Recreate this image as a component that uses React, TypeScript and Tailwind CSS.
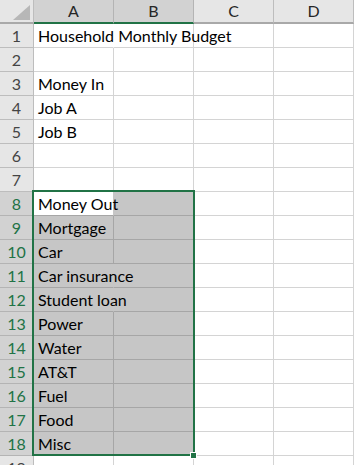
const rows: string[] = [
  "Household Monthly Budget",
  "",
  "Money In",
  "Job A",
  "Job B",
  "",
  "",
  "Money Out",
  "Mortgage",
  "Car",
  "Car insurance",
  "Student loan",
  "Power",
  "Water",
  "AT&T",
  "Fuel",
  "Food",
  "Misc",
  "",
];

// rows whose text runs past column A hide the A/B gridline
const spills = [1, 8, 11, 12];

const cols = ["A", "B", "C", "D"];

export default function App() {
  return (
    <div className="relative w-[355px] h-[465px] overflow-hidden bg-white font-['Lato','Liberation_Sans',sans-serif]">
      {/* column headers */}
      <div className="flex h-[24px]">
        <div className="relative w-[34px] h-full bg-[#e6e6e6] border-r border-b-2 border-r-[#bdbdbd] border-b-[#a9a9a9]">
          <svg className="absolute left-[13px] top-[5px]" width="17" height="15" viewBox="0 0 17 15">
            <polygon points="17,0 17,15 0,15" fill="#b7b7b7" />
          </svg>
        </div>
        {cols.map((c, i) => {
          const sel = i < 2;
          return (
            <div
              key={c}
              className={
                sel
                  ? "w-[80px] h-full flex items-center justify-center bg-[#d2d2d2] border-r border-r-[#b4b4b4] border-b-2 border-b-[#217346] text-[16px] text-[#262626]"
                  : "w-[80px] h-full flex items-center justify-center bg-[#e6e6e6] border-r border-r-[#bdbdbd] border-b-2 border-b-[#a9a9a9] text-[16px] text-[#262626]"
              }
            >
              {c}
            </div>
          );
        })}
      </div>

      {rows.map((text, r) => {
        const n = r + 1;
        const sel = n >= 8 && n <= 18;
        return (
          <div key={n} className="flex h-[24px]">
            <div
              className={
                sel
                  ? "w-[34px] h-full flex items-center justify-center bg-[#d2d2d2] border-r border-b border-r-[#217346] border-b-[#b4b4b4] text-[16px] text-[#217346]"
                  : "w-[34px] h-full flex items-center justify-center bg-[#e6e6e6] border-r border-b border-r-[#bdbdbd] border-b-[#bdbdbd] text-[16px] text-[#444444]"
              }
            >
              {n}
            </div>
            {cols.map((c, i) => {
              const inSel = sel && i < 2;
              const active = n === 8 && i === 0;
              const hideRight = i === 0 && spills.includes(n);
              let cls = "w-[80px] h-full border-r border-b border-[#d4d4d4]";
              if (inSel) cls = "w-[80px] h-full border-r border-b border-[#a6a6a6] bg-[#c6c6c6]";
              if (active) cls = "w-[80px] h-full border-r border-b border-[#a6a6a6] bg-white";
              if (hideRight && active) cls += " border-r-[#c6c6c6]";
              else if (hideRight && inSel) cls += " border-r-[#c6c6c6]";
              else if (hideRight) cls += " border-r-white";
              return (
                <div key={c} className={cls + " relative"}>
                  {i === 0 && text && (
                    <span className="absolute left-[4px] bottom-[1px] z-10 whitespace-nowrap text-[16px] leading-[20px] text-black">
                      {text}
                    </span>
                  )}
                </div>
              );
            })}
          </div>
        );
      })}

      {/* selection range A8:B18 */}
      <div className="absolute left-[32px] top-[190px] w-[163px] h-[266px] border-2 border-[#217346] pointer-events-none z-20" />
      <div className="absolute left-[190px] top-[452px] w-[7px] h-[7px] bg-[#217346] border border-white z-30" />
    </div>
  );
}
